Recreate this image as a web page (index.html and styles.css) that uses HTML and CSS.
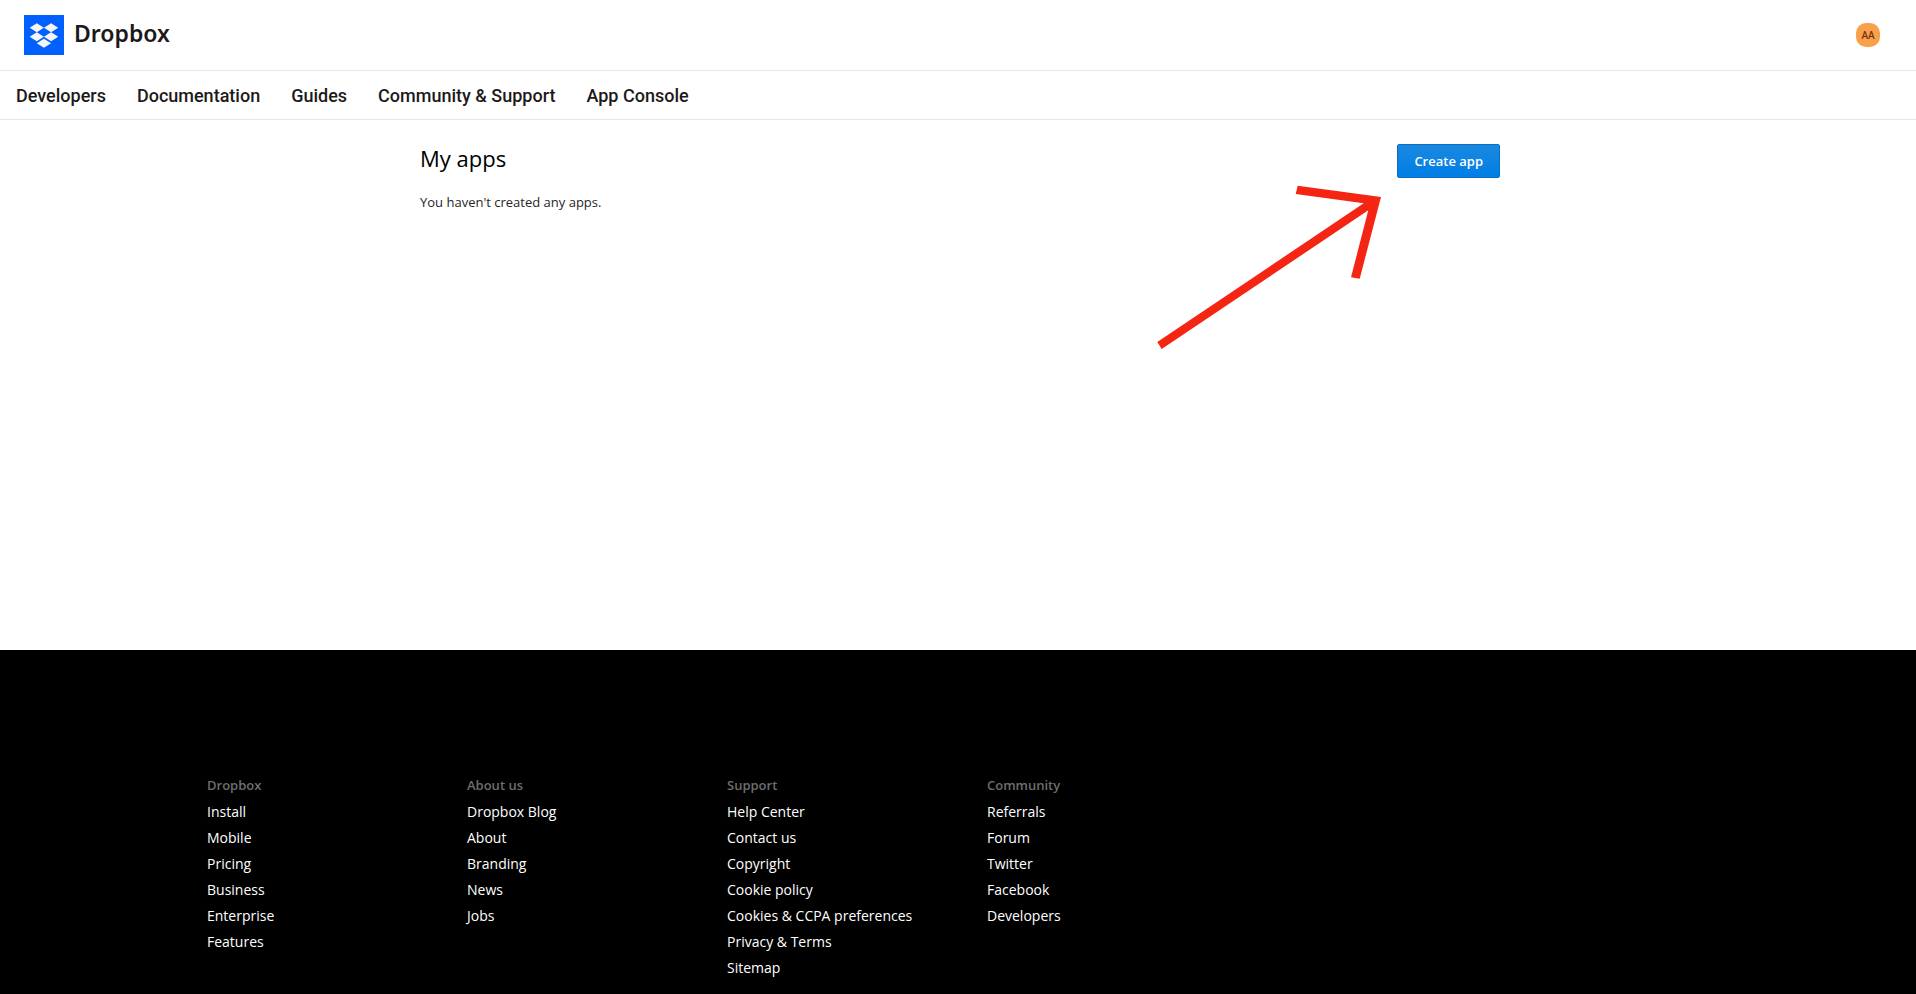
FILE: index.html
```html
<!DOCTYPE html>
<html lang="en">
<head>
<meta charset="utf-8">
<meta name="viewport" content="width=device-width, initial-scale=1">
<title>My apps - Dropbox</title>
<link rel="stylesheet" href="styles.css">
</head>
<body>
<header class="topbar">
  <a class="brand" href="#">
    <svg class="brand-mark" viewBox="0 0 40 40" aria-hidden="true">
      <rect width="40" height="40" fill="#0061fe"/>
      <path fill="#f7f5f2" d="M12.800 8.200l7.100 4.500-7.100 4.500-7.100-4.500zM27.100 8.200l7.100 4.500-7.100 4.500-7.200-4.500zM12.800 17.200l7.100 4.500-7.100 4.500-7.100-4.500zM27.100 17.200l7.100 4.500-7.100 4.500-7.200-4.500zM12.800 28.300l7.100-4.600 7.200 4.600-7.200 4.500z"/>
    </svg>
    <span class="brand-name">Dropbox</span>
  </a>
  <button class="avatar" type="button" aria-label="Account menu">AA</button>
</header>
<nav class="mainnav" aria-label="Main">
  <a href="#">Developers</a>
  <a href="#">Documentation</a>
  <a href="#">Guides</a>
  <a href="#">Community &amp; Support</a>
  <a href="#">App Console</a>
</nav>
<main class="content">
  <div class="content-head">
    <h1>My apps</h1>
    <button class="create" type="button">Create app</button>
  </div>
  <p class="empty">You haven't created any apps.</p>
  <svg class="pointer" viewBox="1150 180 240 180" aria-hidden="true">
    <path fill="#f42613" d="M1297.700 185.700L1381 197l-21.300 81.700-8.700-1.400 17.300-67L1161.700 349l-4.400-7 206.400-138.700-68-9.300z"/>
  </svg>
</main>
<footer class="footer">
  <div class="footer-grid">
    <section>
      <h2>Dropbox</h2>
      <ul>
        <li><a href="#">Install</a></li>
        <li><a href="#">Mobile</a></li>
        <li><a href="#">Pricing</a></li>
        <li><a href="#">Business</a></li>
        <li><a href="#">Enterprise</a></li>
        <li><a href="#">Features</a></li>
      </ul>
    </section>
    <section>
      <h2>About us</h2>
      <ul>
        <li><a href="#">Dropbox Blog</a></li>
        <li><a href="#">About</a></li>
        <li><a href="#">Branding</a></li>
        <li><a href="#">News</a></li>
        <li><a href="#">Jobs</a></li>
      </ul>
    </section>
    <section>
      <h2>Support</h2>
      <ul>
        <li><a href="#">Help Center</a></li>
        <li><a href="#">Contact us</a></li>
        <li><a href="#">Copyright</a></li>
        <li><a href="#">Cookie policy</a></li>
        <li><a href="#">Cookies &amp; CCPA preferences</a></li>
        <li><a href="#">Privacy &amp; Terms</a></li>
        <li><a href="#">Sitemap</a></li>
      </ul>
    </section>
    <section>
      <h2>Community</h2>
      <ul>
        <li><a href="#">Referrals</a></li>
        <li><a href="#">Forum</a></li>
        <li><a href="#">Twitter</a></li>
        <li><a href="#">Facebook</a></li>
        <li><a href="#">Developers</a></li>
      </ul>
    </section>
  </div>
</footer>
</body>
</html>
```
FILE: styles.css
```css
* {
  box-sizing: border-box;
}

body {
  margin: 0;
  min-height: 100vh;
  display: flex;
  flex-direction: column;
  background: #fff;
  color: #262626;
  font-family: "Open Sans", sans-serif;
  font-size: 13px;
}

a {
  color: inherit;
  text-decoration: none;
}

button {
  font-family: inherit;
  cursor: pointer;
}

.topbar {
  display: flex;
  align-items: center;
  justify-content: space-between;
  padding: 15px 36px 15px 24px;
  border-bottom: 1px solid #e9e7e1;
}

.brand {
  display: flex;
  align-items: center;
  gap: 10px;
}

.brand-mark {
  width: 40px;
  height: 40px;
}

.brand-name {
  color: #1e1919;
  font-family: "Noto Sans", sans-serif;
  font-size: 23px;
  font-weight: 600;
  line-height: 30px;
  padding-bottom: 4px;
}

.avatar {
  width: 24px;
  height: 24px;
  padding: 0;
  border: 0;
  border-radius: 10px;
  background: #faa04a;
  color: #6b2f10;
  font-family: "Noto Sans", sans-serif;
  font-size: 10px;
  font-weight: 500;
}

.mainnav {
  display: flex;
  flex-wrap: wrap;
  gap: 31px;
  padding: 13px 16px 11px;
  border-bottom: 1px solid #e6e6e6;
  color: #1e1919;
  font-family: Roboto, sans-serif;
  font-size: 18px;
  font-weight: 500;
  line-height: 24px;
}

.content {
  position: relative;
  flex: 1 0 auto;
  width: 100%;
  max-width: 1084px;
  margin: 0 auto;
  padding: 24px 0 0 4px;
}

.content-head {
  display: flex;
  align-items: flex-start;
  justify-content: space-between;
}

h1 {
  margin: 0;
  color: #000;
  font-size: 22px;
  font-weight: 400;
  line-height: 28px;
}

.create {
  height: 34px;
  padding: 0 16px;
  border: 1px solid #0c6ebe;
  border-radius: 2px;
  background: linear-gradient(#1b89e0, #007ee5);
  color: #fff;
  font-size: 13px;
  font-weight: 600;
}

.empty {
  margin: 14px 0 0;
  line-height: 20px;
}

.pointer {
  position: absolute;
  top: 60px;
  right: 110px;
  width: 240px;
  height: 180px;
}

.footer {
  padding: 121px 24px 13px;
  background: #000;
  color: #fff;
}

.footer-grid {
  display: grid;
  grid-template-columns: repeat(4, 260px);
  width: 100%;
  max-width: 1502px;
  margin: 0 auto;
}

h2 {
  margin: 0;
  color: #6e6e6e;
  font-size: 13px;
  font-weight: 600;
  line-height: 28px;
}

ul {
  margin: 0;
  padding: 0;
  list-style: none;
  font-size: 14px;
  line-height: 26px;
}
```
